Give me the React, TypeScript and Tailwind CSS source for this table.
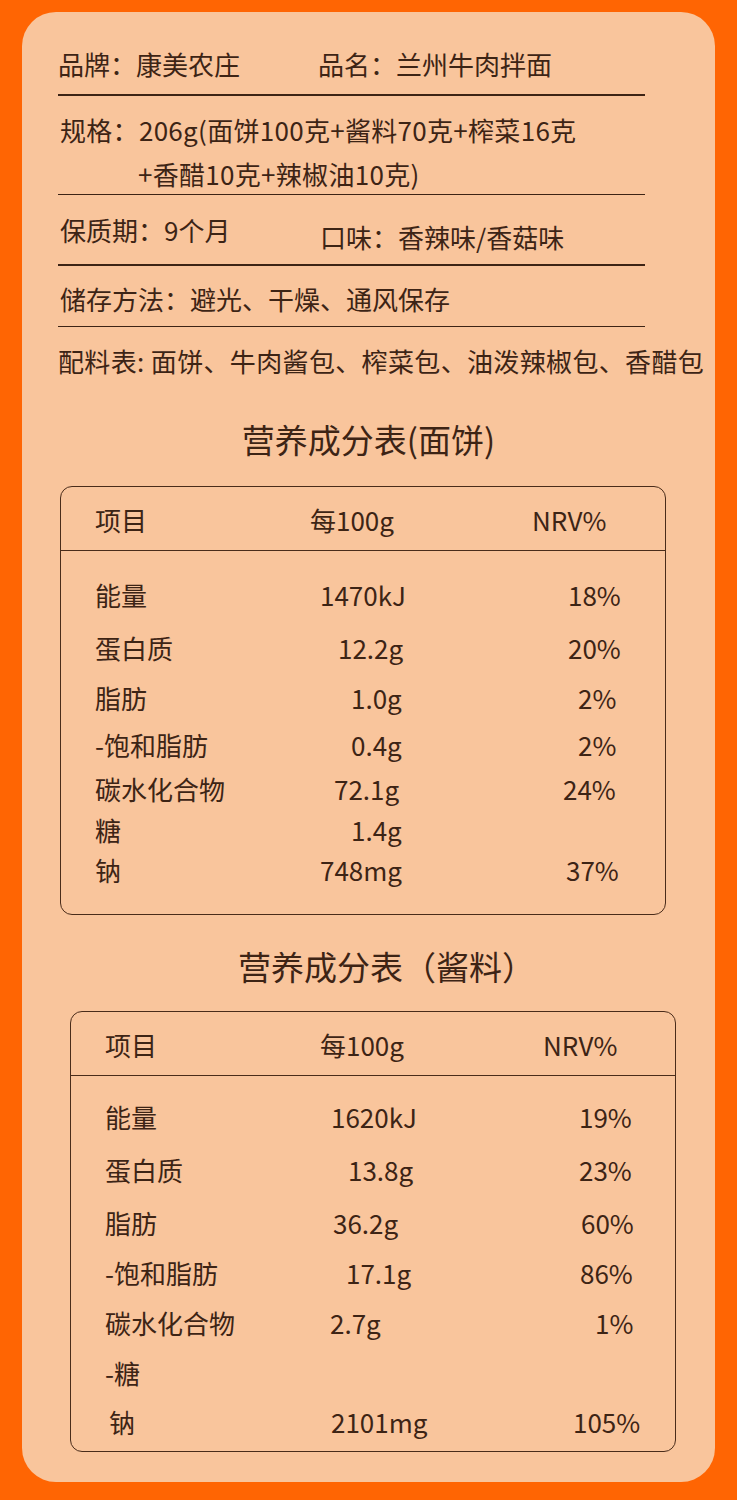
type Row = {
  label: string;
  value?: string;
  nrv?: string;
  lw: string;
  vw: string;
  h: string;
  lcls?: string;
};

const noodleRows: Row[] = [
  { label: "能量", value: "1470kJ", nrv: "18%", lw: "w-[225px]", vw: "w-[248px]", h: "h-[52px]" },
  { label: "蛋白质", value: "12.2g", nrv: "20%", lw: "w-[243px]", vw: "w-[230px]", h: "h-[53px]" },
  { label: "脂肪", value: "1.0g", nrv: "2%", lw: "w-[256px]", vw: "w-[227px]", h: "h-[48px]" },
  { label: "-饱和脂肪", value: "0.4g", nrv: "2%", lw: "w-[256px]", vw: "w-[227px]", h: "h-[45px]" },
  { label: "碳水化合物", value: "72.1g", nrv: "24%", lw: "w-[239px]", vw: "w-[229px]", h: "h-[43px]" },
  { label: "糖", value: "1.4g", lw: "w-[256px]", vw: "w-[227px]", h: "h-[40px]" },
  { label: "钠", value: "748mg", nrv: "37%", lw: "w-[225px]", vw: "w-[246px]", h: "h-[40px]" },
];

const sauceRows: Row[] = [
  { label: "能量", value: "1620kJ", nrv: "19%", lw: "w-[226px]", vw: "w-[248px]", h: "h-[53px]" },
  { label: "蛋白质", value: "13.8g", nrv: "23%", lw: "w-[243px]", vw: "w-[231px]", h: "h-[54px]" },
  { label: "脂肪", value: "36.2g", nrv: "60%", lw: "w-[228px]", vw: "w-[248px]", h: "h-[51px]" },
  { label: "-饱和脂肪", value: "17.1g", nrv: "86%", lw: "w-[241px]", vw: "w-[234px]", h: "h-[50px]" },
  { label: "碳水化合物", value: "2.7g", nrv: "1%", lw: "w-[225px]", vw: "w-[265px]", h: "h-[50px]" },
  { label: "-糖", lw: "w-[225px]", vw: "w-[265px]", h: "h-[49px]" },
  { label: "钠", value: "2101mg", nrv: "105%", lw: "w-[222px]", vw: "w-[242px]", h: "h-[50px]", lcls: "ml-[4px]" },
];

function NutritionTable({
  rows,
  headLw,
  headVw,
  bodyPad,
  offset,
}: {
  rows: Row[];
  headLw: string;
  headVw: string;
  bodyPad: string;
  offset: string;
}) {
  return (
    <div className={`${offset} w-[606px] rounded-[12px] border-[1.5px] border-[#4a2c1a]`}>
      <div className="flex h-[64px] items-center pl-[34px] pt-[2px] border-b-[1.5px] border-[#4a2c1a]">
        <span className={headLw}>项目</span>
        <span className={headVw}>每100g</span>
        <span>NRV%</span>
      </div>
      <div className={`pl-[34px] ${bodyPad}`}>
        {rows.map((r) => (
          <div key={r.label} className={`flex items-center ${r.h}`}>
            <span className={`${r.lw} ${r.lcls ?? ""}`}>{r.label}</span>
            <span className={r.vw}>{r.value ?? ""}</span>
            <span>{r.nrv ?? ""}</span>
          </div>
        ))}
      </div>
    </div>
  );
}

export default function App() {
  return (
    <div
      className="min-h-[1500px] bg-[#ff6503] pt-[12px] pb-[17px] text-[#3d2415] text-[26px] leading-[36px]"
      style={{ fontFamily: '"Noto Sans CJK SC", "Noto Sans", sans-serif' }}
    >
      <div className="mx-[22px] rounded-[34px] bg-[#f9c59c] pt-[34px] pb-[30px]">
        {/* basic info */}
        <div className="pl-[36px]">
          <div className="flex">
            <span className="w-[260px]">品牌：康美农庄</span>
            <span>品名：兰州牛肉拌面</span>
          </div>
          <div className="mt-[12px] h-[1.5px] w-[587px] bg-[#3d2415]" />

          <div className="mt-[12px] pl-[2px] leading-[44px] whitespace-nowrap tracking-[0.3px]">
            规格：206g(面饼100克+酱料70克+榨菜16克
            <br />
            <span className="pl-[78px]">+香醋10克+辣椒油10克)</span>
          </div>
          <div className="-mt-[2px] h-[1.5px] w-[587px] bg-[#3d2415]" />

          <div className="mt-[17px] flex pl-[2px]">
            <span className="w-[260px]">保质期：9个月</span>
            <span className="mt-[7px]">口味：香辣味/香菇味</span>
          </div>
          <div className="mt-[9px] h-[1.5px] w-[587px] bg-[#3d2415]" />

          <div className="mt-[15px] pl-[2px]">储存方法：避光、干燥、通风保存</div>
          <div className="mt-[9px] h-[1.5px] w-[587px] bg-[#3d2415]" />

          <div className="mt-[16px] whitespace-nowrap tracking-[0.35px]">
            配料表: 面饼、牛肉酱包、榨菜包、油泼辣椒包、香醋包
          </div>
        </div>

        {/* noodle table */}
        <div className="mt-[38px] text-center text-[33px] leading-[44px]">营养成分表(面饼)</div>
        <div className="mt-[25px]">
          <NutritionTable
            rows={noodleRows}
            headLw="w-[215px]"
            headVw="w-[222px]"
            bodyPad="pt-[18px] pb-[24px]"
            offset="ml-[38px]"
          />
        </div>

        {/* sauce table */}
        <div className="mt-[29px] pl-[36px] text-center text-[33px] leading-[44px]">营养成分表（酱料）</div>
        <div className="mt-[23px]">
          <NutritionTable
            rows={sauceRows}
            headLw="w-[215px]"
            headVw="w-[223px]"
            bodyPad="pt-[14px] pb-[4px]"
            offset="ml-[48px]"
          />
        </div>
      </div>
    </div>
  );
}
